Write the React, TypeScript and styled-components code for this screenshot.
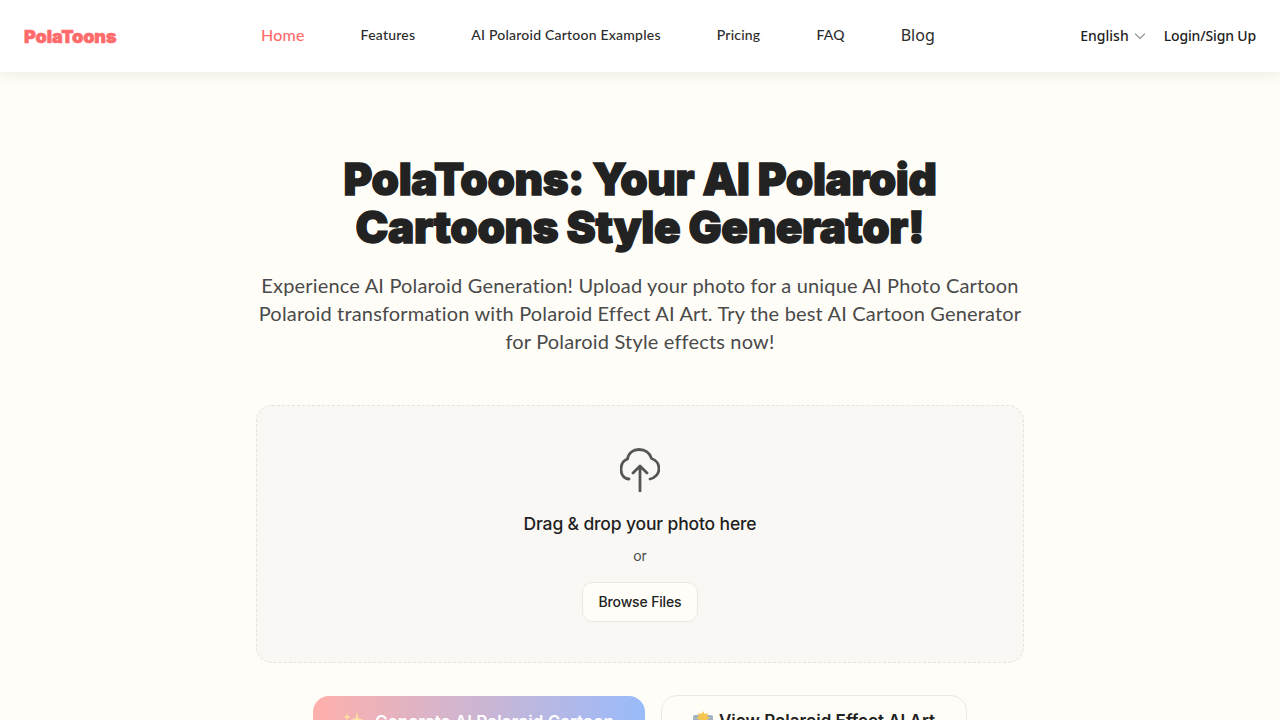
import React from 'react';
import styled, { createGlobalStyle } from 'styled-components';

const GlobalStyle = createGlobalStyle`
    html, body {
        margin: 0;
        height: 720px;
        overflow: hidden;
        background: #fffdf7;
        font-family: "Lato", "Liberation Sans", sans-serif;
    }
`;

const Header = styled.header`
    display: flex;
    align-items: center;
    height: 72px;
    padding: 0 24px;
    background: #ffffff;
    box-shadow: 0 2px 12px rgba(90, 70, 40, 0.1);
    position: relative;
`;

const Logo = styled.div`
    flex: 0 0 237px;
    font-family: "Inter", sans-serif;
    font-weight: 900;
    font-size: 18px;
    letter-spacing: -0.1px;
    color: #ff6b6b;
    -webkit-text-stroke: 0.6px #ff6b6b;
`;

const Nav = styled.nav`
    display: flex;
    align-items: center;
    gap: 56px;
    padding-bottom: 3px;
`;

const NavLink = styled.a<{ $active?: boolean; $large?: boolean }>`
    font-size: ${(p) => (p.$active || p.$large ? '16px' : '14px')};
    font-family: ${(p) => (p.$large ? '"Noto Sans", sans-serif' : '"Lato", sans-serif')};
    font-weight: ${(p) => (p.$large ? 400 : 500)};
    letter-spacing: ${(p) => (p.$active ? '0.2px' : p.$large ? '0' : '0.22px')};
    color: ${(p) => (p.$active ? '#ff6b6b' : '#2b2b2b')};
`;

const RightGroup = styled.div`
    margin-left: auto;
    display: flex;
    align-items: center;
    gap: 17px;
    padding-bottom: 2px;
    font-family: "Noto Sans", sans-serif;
    font-size: 14px;
    font-weight: 500;
    color: #222222;
`;

const Language = styled.div`
    display: flex;
    align-items: center;
    gap: 4px;
`;

const Chevron = styled.svg`
    width: 14px;
    height: 14px;
    margin-top: 2px;
    fill: none;
    stroke: #9a9a9a;
    stroke-width: 1.2;
    stroke-linecap: round;
    stroke-linejoin: round;
`;

const LoginLink = styled.span`
    letter-spacing: -0.15px;
`;

const Hero = styled.main`
    display: flex;
    flex-direction: column;
    align-items: center;
    padding-top: 83px;
`;

const Title = styled.h1`
    margin: 0;
    width: 768px;
    text-align: center;
    font-family: "Inter", sans-serif;
    font-weight: 900;
    font-size: 44px;
    line-height: 48px;
    letter-spacing: -0.4px;
    color: #222222;
    -webkit-text-stroke: 1.4px #222222;
`;

const Subtitle = styled.p`
    margin: 20px 0 0;
    width: 768px;
    text-align: center;
    font-family: "Lato", sans-serif;
    font-size: 20px;
    line-height: 28px;
    letter-spacing: 0.17px;
    color: #4a4a4a;
`;

const DropZone = styled.section`
    box-sizing: border-box;
    width: 768px;
    height: 258px;
    margin-top: 50px;
    padding-top: 42px;
    display: flex;
    flex-direction: column;
    align-items: center;
    background: #f9f8f4;
    border: 1px dashed #e6e4de;
    border-radius: 16px;
`;

const UploadIcon = styled.svg`
    width: 40px;
    height: 44px;
    fill: none;
    stroke: #555555;
    stroke-width: 2.8;
    stroke-linecap: round;
    stroke-linejoin: round;
`;

const DropTitle = styled.div`
    margin-top: 20px;
    font-family: "Inter", sans-serif;
    font-size: 17.5px;
    line-height: 24px;
    font-weight: 500;
    letter-spacing: -0.15px;
    color: #1f1f1f;
`;

const OrText = styled.div`
    margin-top: 10px;
    font-family: "Inter", sans-serif;
    font-size: 14px;
    line-height: 20px;
    color: #4a4a4a;
`;

const BrowseButton = styled.button`
    box-sizing: border-box;
    margin-top: 16px;
    width: 116px;
    height: 40px;
    padding: 0 0 2px;
    background: #fffdf7;
    border: 1px solid #ebe9e3;
    border-radius: 10px;
    font-family: "Inter", sans-serif;
    font-size: 14px;
    font-weight: 500;
    letter-spacing: -0.15px;
    color: #222222;
`;

const Actions = styled.div`
    display: flex;
    align-items: flex-start;
    gap: 16px;
    margin-top: 32px;
`;

const ActionButton = styled.button<{ $primary?: boolean }>`
    box-sizing: border-box;
    display: flex;
    align-items: center;
    justify-content: center;
    gap: ${(p) => (p.$primary ? '11px' : '6px')};
    width: ${(p) => (p.$primary ? '332px' : '306px')};
    height: 56px;
    padding: 0 0 5px;
    margin-top: ${(p) => (p.$primary ? '1px' : '0')};
    border-radius: 16px;
    font-family: "Inter", sans-serif;
    font-size: 17px;
    font-weight: 600;
    color: ${(p) => (p.$primary ? '#ffffff' : '#222222')};
    background: ${(p) => (p.$primary ? 'linear-gradient(90deg, #ffb0ab, #99bbfb)' : '#fffdf7')};
    border: ${(p) => (p.$primary ? 'none' : '1px solid #ebe9e3')};
`;

const EmojiIcon = styled.svg`
    width: 20px;
    height: 22px;
    margin-top: 3px;
    flex: none;
`;

const navItems = ['Features', 'AI Polaroid Cartoon Examples', 'Pricing', 'FAQ'];

export default function App() {
    return (
        <>
            <GlobalStyle />
            <Header>
                <Logo>PolaToons</Logo>
                <Nav>
                    <NavLink $active>Home</NavLink>
                    {navItems.map((item) => (
                        <NavLink key={item}>{item}</NavLink>
                    ))}
                    <NavLink $large>Blog</NavLink>
                </Nav>
                <RightGroup>
                    <Language>
                        English
                        <Chevron viewBox="0 0 14 14">
                            <path d="M2.500 5l4.500 4.500L11.500 5" />
                        </Chevron>
                    </Language>
                    <LoginLink>Login/Sign Up</LoginLink>
                </RightGroup>
            </Header>
            <Hero>
                <Title>PolaToons: Your AI Polaroid<br />Cartoons Style Generator!</Title>
                <Subtitle>
                    Experience AI Polaroid Generation! Upload your photo for a unique AI Photo Cartoon Polaroid transformation with Polaroid Effect AI Art. Try the best AI Cartoon Generator for Polaroid Style effects now!
                </Subtitle>
                <DropZone>
                    <UploadIcon viewBox="0 0 40 44">
                        <path d="M9 31C4 31 1 26.500 1 21.500C1 16.500 3.500 12.500 7.500 11C8.500 5 13 1.500 19 1.500C25 1.500 30 5 31.500 10.500C36 12 39 16 39 20.500C39 26 35 30 30 31" />
                        <path d="M20 43V19M13 25l7-7 7 7" />
                    </UploadIcon>
                    <DropTitle>Drag &amp; drop your photo here</DropTitle>
                    <OrText>or</OrText>
                    <BrowseButton>Browse Files</BrowseButton>
                </DropZone>
                <Actions>
                    <ActionButton $primary>
                        <EmojiIcon viewBox="0 0 20 22">
                            <path d="M13 0l1.500 6 5 2-5 2-1.500 6-1.500-6-5-2 5-2z" fill="#ffdfa6" />
                            <path d="M3 1l1 3 3 1-3 1-1 3-1-3-3-1 3-1z" fill="#ffdfa6" />
                        </EmojiIcon>
                        Generate AI Polaroid Cartoon
                    </ActionButton>
                    <ActionButton>
                        <EmojiIcon viewBox="0 0 20 22">
                            <rect x="0" y="4" width="20" height="16" rx="2" fill="#a4b2c2" />
                            <path d="M10 0l1.500 3 3.500-1-1 3.500 3 1.500-3 1.500 1 3.500-3.500-1L10 13l-1.500-2.500-3.500 1 1-3.500L3 7l3-1.500L5 2l3.500 1z" fill="#f4c64f" />
                        </EmojiIcon>
                        View Polaroid Effect AI Art
                    </ActionButton>
                </Actions>
            </Hero>
        </>
    );
}
